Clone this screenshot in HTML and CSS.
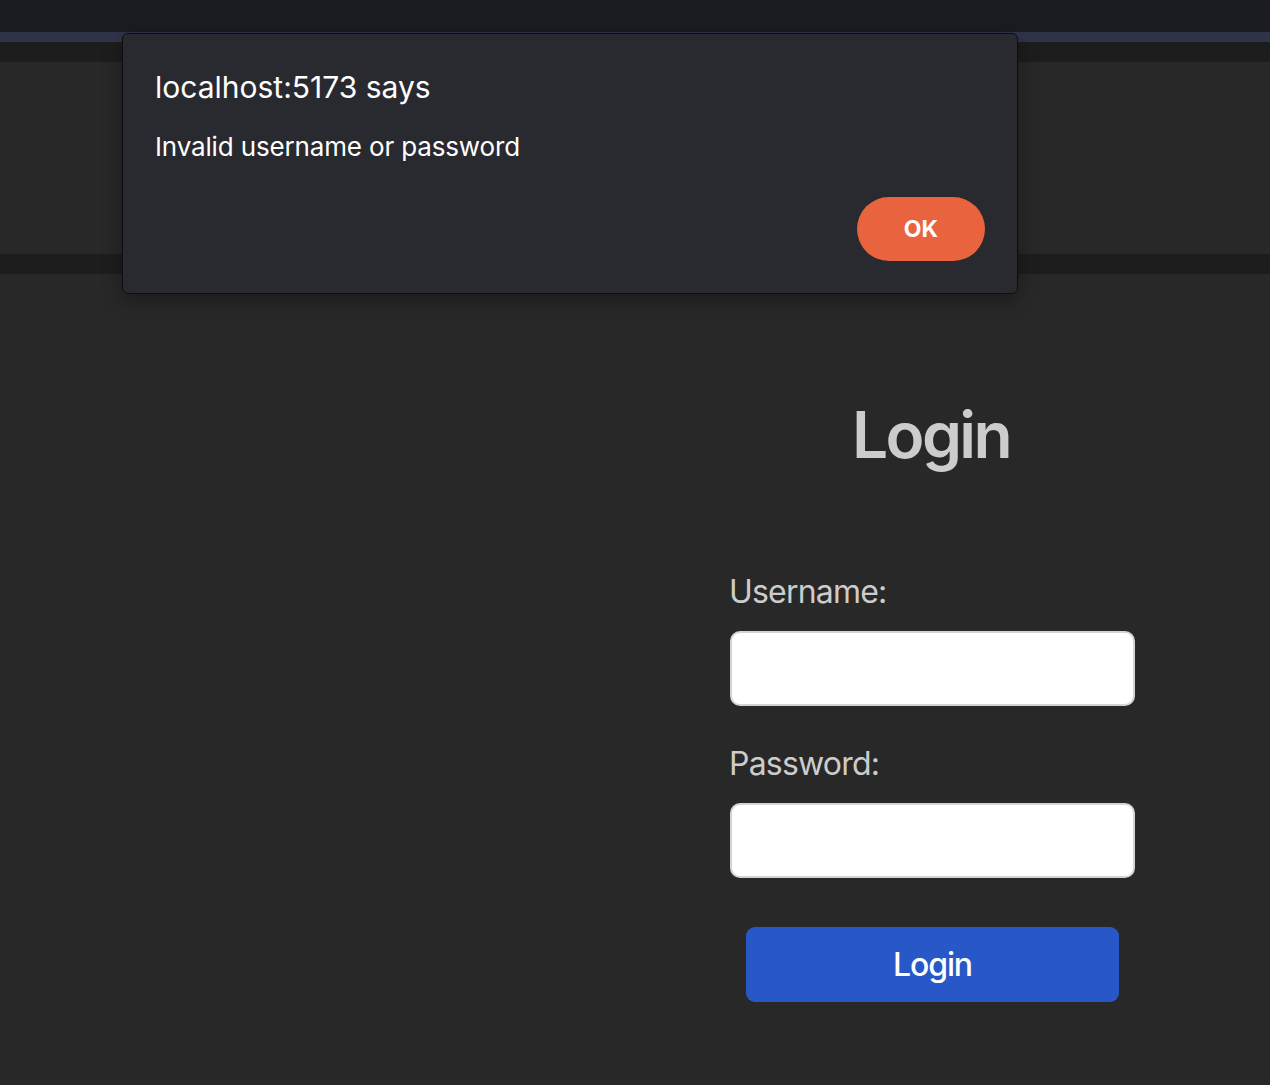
FILE: index.html
```html
<!DOCTYPE html>
<html lang="en">
<head>
<meta charset="utf-8">
<title>Login</title>
<link rel="stylesheet" href="styles.css">
</head>
<body>
<div class="chrome"></div>
<div class="stripe"></div>
<div class="band"></div>
<header class="header"></header>
<div class="band"></div>
<main class="main">
  <form class="login-form">
    <h1 class="title">Login</h1>
    <label class="label" for="username">Username:</label>
    <input class="field" id="username" type="text">
    <label class="label label-second" for="password">Password:</label>
    <input class="field" id="password" type="password">
    <button class="submit" type="button">Login</button>
  </form>
</main>

<div class="dialog">
  <div class="dialog-title">localhost:5173 says</div>
  <div class="dialog-message">Invalid username or password</div>
  <div class="dialog-actions">
    <button class="ok" type="button">OK</button>
  </div>
</div>
</body>
</html>
```

FILE: styles.css
```css
html, body {
  margin: 0;
  padding: 0;
}
body {
  background: #282828;
  font-family: Inter, "Noto Sans", "Liberation Sans", sans-serif;
  height: 1085px;
  overflow: hidden;
}
.chrome {
  height: 32px;
  background: #1b1c22;
}
.stripe {
  height: 10px;
  background: #30344a;
}
.band {
  height: 20px;
  background: #1d1d1d;
}
.header {
  height: 192px;
  background: #282828;
}
.main {
  display: flex;
  justify-content: flex-end;
  padding: 129px 135px 0 0;
}
.login-form {
  width: 405px;
  display: flex;
  flex-direction: column;
}
.title {
  margin: 0 0 0 -3px;
  font-size: 64px;
  line-height: 1;
  font-weight: 600;
  letter-spacing: -2.6px;
  color: #cccccc;
  text-align: center;
}
.label {
  margin: 109px 0 0 -1px;
  font-size: 32px;
  line-height: 1;
  letter-spacing: -0.8px;
  color: #cccccc;
}
.label-second {
  margin-top: 42px;
}
.field {
  margin-top: 23px;
  height: 75px;
  box-sizing: border-box;
  border: 2px solid #d4d4d8;
  border-radius: 10px;
  background: #ffffff;
  width: 405px;
  padding: 0 12px;
  font-size: 28px;
}
.submit {
  margin: 49px auto 0;
  width: 373px;
  height: 75px;
  border: none;
  border-radius: 9px;
  background: #2858c8;
  color: #ffffff;
  font-family: inherit;
  font-size: 32px;
  font-weight: 500;
  letter-spacing: -1.1px;
}
.dialog {
  position: absolute;
  left: 122px;
  top: 33px;
  width: 896px;
  height: 261px;
  box-sizing: border-box;
  background: #292a2f;
  border: 1px solid #0d0d0f;
  border-radius: 6px;
  padding: 38px 32px 32px 32px;
  display: flex;
  flex-direction: column;
  box-shadow: 0 6px 20px rgba(0, 0, 0, 0.35);
}
.dialog-title {
  font-size: 30px;
  line-height: 1;
  color: #ffffff;
}
.dialog-message {
  margin-top: 32px;
  font-size: 26px;
  line-height: 1;
  letter-spacing: -0.15px;
  color: #ffffff;
}
.dialog-actions {
  margin-top: auto;
  display: flex;
  justify-content: flex-end;
}
.ok {
  width: 128px;
  height: 64px;
  border: none;
  border-radius: 32px;
  background: #e8633e;
  color: #ffffff;
  font-family: inherit;
  font-size: 23px;
  font-weight: 700;
}
```
